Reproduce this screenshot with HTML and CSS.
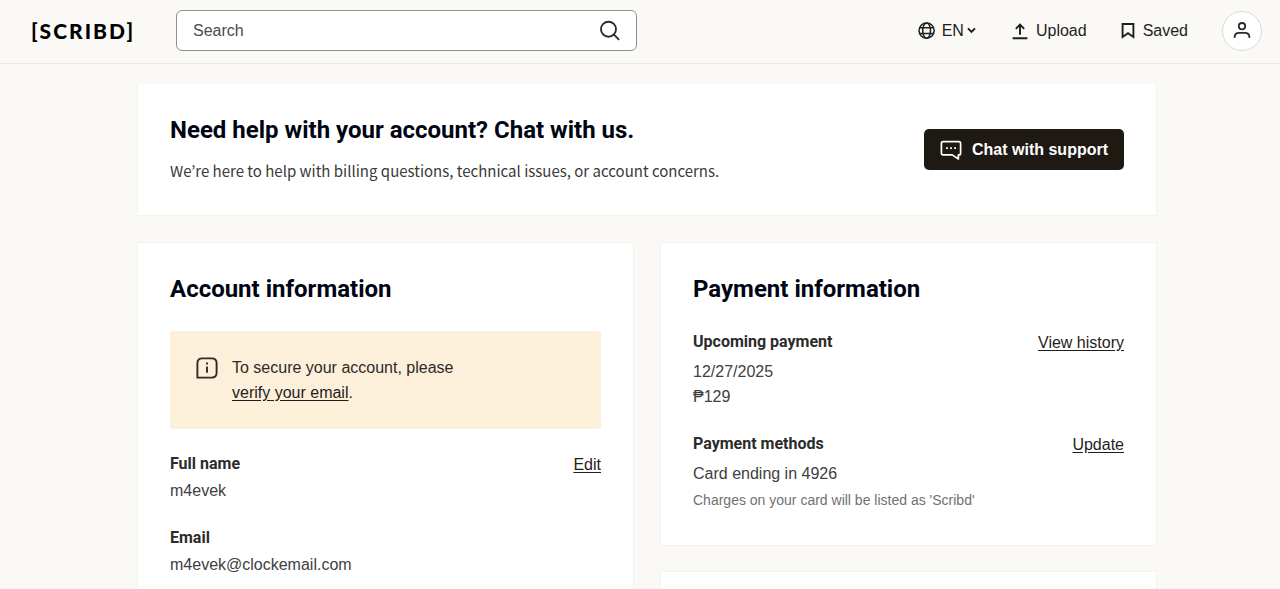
FILE: index.html
```html
<!DOCTYPE html>
<html lang="en">
<head>
  <meta charset="UTF-8" />
  <meta name="viewport" content="width=device-width, initial-scale=1.0"/>
  <title>Your Account | Scribd</title>
  <link rel="stylesheet" href="styles.css">
</head>

<body>
  <header class="header">
    <a href="#" class="logo">[SCRIBD]</a>

    <form class="search">
      <input type="text" class="search-input" aria-label="Search" placeholder="Search" />
      <button type="submit" class="search-btn" aria-label="Submit search">
        <svg width="22" height="22" viewBox="0 0 22 22" fill="none" stroke="currentColor" stroke-width="1.9" stroke-linecap="round">
          <circle cx="9.5" cy="9.2" r="7.5"/>
          <path d="M15 14.7 L19.6 19.3"/>
        </svg>
      </button>
    </form>

    <nav class="nav">
      <button type="button" class="nav-item language">
        <svg width="18" height="18" viewBox="0 0 18 18" fill="none" stroke="currentColor" stroke-width="1.5">
          <circle cx="8.6" cy="8.6" r="7.6"/>
          <ellipse cx="8.6" cy="8.6" rx="3.9" ry="7.6"/>
          <path d="M1.6 5.8 H15.6 M1.6 11.4 H15.6"/>
        </svg>
        <span>EN</span>
        <svg class="chevron" width="9" height="7" viewBox="0 0 9 7" fill="none" stroke="currentColor" stroke-width="2">
          <path d="M1 1.4 L4.5 4.9 L8 1.4"/>
        </svg>
      </button>
      <a href="#" class="nav-item">
        <svg width="16" height="18" viewBox="0 0 16 18" fill="none" stroke="currentColor" stroke-width="1.9">
          <path d="M8 12.8 V3 M3.8 6.8 L8 2.6 L12.2 6.8 M0.6 16.2 H15.4"/>
        </svg>
        <span>Upload</span>
      </a>
      <a href="#" class="nav-item">
        <svg width="14" height="18" viewBox="0 0 14 18" fill="none" stroke="currentColor" stroke-width="1.9">
          <path d="M1.6 2 H12.4 V15 L7 11.2 L1.6 15 Z"/>
        </svg>
        <span>Saved</span>
      </a>
      <button type="button" class="avatar" aria-label="Account menu">
        <svg width="18" height="18" viewBox="0 0 18 18" fill="none" stroke="currentColor" stroke-width="1.8" stroke-linecap="round">
          <circle cx="9" cy="4.2" r="3.2"/>
          <path d="M1.6 15.2 C1.6 12 4 10.8 6.2 10.8 H11.8 C14 10.8 16.4 12 16.4 15.2"/>
        </svg>
      </button>
    </nav>
  </header>

  <main class="main">
    <section class="card help">
      <div>
        <h2>Need help with your account? Chat with us.</h2>
        <p class="help-text">We’re here to help with billing questions, technical issues, or account concerns.</p>
      </div>
      <button type="button" class="chat-btn">
        <svg width="22" height="22" viewBox="0 0 22 22" fill="none" stroke="currentColor" stroke-width="1.7" stroke-linejoin="round">
          <path d="M3.2 2.6 H18.8 Q20.6 2.6 20.6 4.4 V14.2 Q20.6 15.9 19 15.9 H18.4 V20 L12.2 15.9 H3.2 Q1.4 15.9 1.4 14.1 V4.4 Q1.4 2.6 3.2 2.6 Z"/>
          <path d="M6 9.2 H7.8 M10.1 9.2 H11.9 M14.2 9.2 H16"/>
        </svg>
        <span>Chat with support</span>
      </button>
    </section>

    <div class="columns">
      <section class="card account">
        <h2>Account information</h2>
        <div class="notice">
          <svg width="22" height="22" viewBox="0 0 22 22" fill="none" stroke="currentColor" stroke-width="1.9">
            <path d="M1.4 20.6 V6.2 Q1.4 1.4 6.2 1.4 H15.8 Q20.6 1.4 20.6 6.2 V15.8 Q20.6 20.6 15.8 20.6 Z"/>
            <path d="M11 9.4 V15.8 M11 5.6 V7.4"/>
          </svg>
          <p>To secure your account, please<br><a href="#">verify your email</a>.</p>
        </div>
        <div class="row">
          <div>
            <h3>Full name</h3>
            <p>m4evek</p>
          </div>
          <a href="#">Edit</a>
        </div>
        <div class="row">
          <div>
            <h3>Email</h3>
            <p>m4evek@clockemail.com</p>
          </div>
        </div>
      </section>

      <div class="column">
        <section class="card payment">
          <h2>Payment information</h2>
          <div class="row">
            <div>
              <h3>Upcoming payment</h3>
              <p>12/27/2025</p>
              <p>₱129</p>
            </div>
            <a href="#">View history</a>
          </div>
          <div class="row">
            <div>
              <h3>Payment methods</h3>
              <p>Card ending in 4926</p>
              <p class="note">Charges on your card will be listed as 'Scribd'</p>
            </div>
            <a href="#">Update</a>
          </div>
        </section>

        <section class="card"></section>
      </div>
    </div>
  </main>
</body>
</html>
```

FILE: styles.css
```css
* {
  margin: 0;
  padding: 0;
  box-sizing: border-box;
}

html {
  height: 100%;
  overflow: hidden;
}

body {
  background: #faf9f5;
  color: #2b2b2b;
  font-family: "Liberation Sans", Arial, sans-serif;
  font-size: 16px;
  line-height: 25px;
}

a {
  color: #1e1e1e;
  text-underline-offset: 2px;
}

button {
  font: inherit;
  color: inherit;
  background: none;
  border: none;
  cursor: pointer;
}

svg {
  flex-shrink: 0;
}

h2,
h3 {
  font-family: Roboto, sans-serif;
  font-weight: bold;
}

h2 {
  color: #000514;
  font-size: 24px;
  line-height: 28px;
}

h3 {
  font-size: 16px;
}

/* header */
.header {
  display: flex;
  align-items: center;
  padding: 10px 18px 12px 31px;
  border-bottom: 1px solid #ebeae5;
}

.logo {
  width: 145px;
  color: #000;
  font-family: Lato, sans-serif;
  font-size: 21px;
  font-weight: 900;
  letter-spacing: 2px;
  text-decoration: none;
}

.search {
  display: flex;
  align-items: center;
  flex: 0 1 461px;
  height: 41px;
  padding: 0 15px 0 16px;
  background: #fff;
  border: 1px solid #8f8f8c;
  border-radius: 6px;
}

.search-input {
  flex: 1;
  font: inherit;
  background: none;
  border: none;
  outline: none;
}

.search-input::placeholder {
  color: #4a4a4a;
}

.search-btn {
  display: flex;
}

.nav {
  display: flex;
  align-items: center;
  gap: 34px;
  margin-left: auto;
}

.nav-item {
  display: flex;
  align-items: center;
  gap: 8px;
  color: #1e1e1e;
  text-decoration: none;
}

.language {
  gap: 6px;
}

.chevron {
  margin: 0 2px 0 -3px;
}

.avatar {
  display: flex;
  align-items: center;
  justify-content: center;
  width: 40px;
  height: 40px;
  background: #fff;
  border: 1px solid #d9d9d6;
  border-radius: 50%;
}

/* cards */
.main {
  max-width: 1050px;
  margin: 0 auto;
  padding: 20px 8px 0 22px;
}

.card {
  padding: 32px;
  background: #fff;
  border: 1px solid #f3f2ee;
}

.help {
  display: flex;
  align-items: center;
  justify-content: space-between;
  margin-bottom: 26px;
  border-top: none;
}

.help-text {
  margin-top: 15px;
  color: #3a3a3a;
  font-family: "Noto Sans CJK KR", sans-serif;
  font-size: 15px;
  line-height: 24px;
}

.chat-btn {
  display: flex;
  align-items: center;
  gap: 10px;
  padding: 8px 16px;
  background: #1e1a13;
  border-radius: 5px;
  color: #fff;
  font-weight: bold;
}

.columns {
  display: grid;
  grid-template-columns: 1fr 1fr;
  gap: 26px;
}

.column {
  display: flex;
  flex-direction: column;
  gap: 25px;
}

.notice {
  display: flex;
  gap: 14px;
  margin-top: 28px;
  padding: 24px 26px;
  background: #fdf0da;
  border-radius: 3px;
}

.notice svg {
  margin-top: 2px;
}

.row {
  display: flex;
  justify-content: space-between;
  margin-top: 22px;
}

.row p {
  color: #404040;
}

.row > a {
  padding-top: 1px;
}

.account h3 {
  margin-bottom: 2px;
}

.payment h2 {
  margin-bottom: 26px;
}

.payment h3 {
  margin-bottom: 5px;
}

.payment h2 + .row {
  margin-top: 0;
}

.row .note {
  margin-top: 2px;
  color: #717171;
  font-size: 14px;
}
```
